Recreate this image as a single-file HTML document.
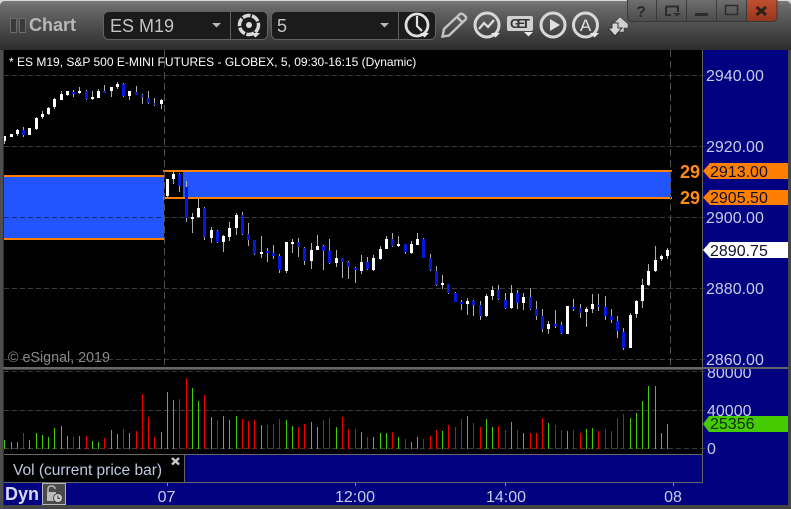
<!DOCTYPE html>
<html><head><meta charset="utf-8"><title>Chart</title>
<style>
html,body{margin:0;padding:0;background:#d8d8d8;width:791px;height:509px;overflow:hidden}
svg{display:block;position:absolute;left:0;top:0}
text{font-family:"Liberation Sans",sans-serif}
</style></head><body>
<svg width="791" height="509" viewBox="0 0 791 509" xmlns="http://www.w3.org/2000/svg">
<defs>
<linearGradient id="tb" x1="0" y1="0" x2="0" y2="1"><stop offset="0" stop-color="#7a7a7a"/><stop offset=".1" stop-color="#6a6a6a"/><stop offset="1" stop-color="#2c2c2c"/></linearGradient>
<linearGradient id="wb" x1="0" y1="0" x2="0" y2="1"><stop offset="0" stop-color="#6e6e6e"/><stop offset="1" stop-color="#4c4c4c"/></linearGradient>
<linearGradient id="cb" x1="0" y1="0" x2="0" y2="1"><stop offset="0" stop-color="#c05030"/><stop offset="1" stop-color="#98361f"/></linearGradient>
</defs>
<path d="M0 7Q0 1 6 1H785Q791 1 791 7V509H0Z" fill="#454545"/>
<path d="M0 7Q0 1 6 1H785Q791 1 791 7V50H0Z" fill="url(#tb)"/>
<rect x="0" y="50" width="3" height="459" fill="#4e4e4e"/>
<rect x="3" y="50" width="1" height="455" fill="#2e2e2e"/>

<!-- left title -->
<g fill="#3a3a3a" stroke="#6c6c6c" stroke-width="1"><rect x="10.5" y="18.5" width="6" height="14"/><rect x="19.5" y="18.5" width="6" height="14"/></g>
<text x="29" y="31" font-size="18" font-weight="bold" fill="#b8b8b8">Chart</text>

<!-- dropdowns -->
<rect x="103.5" y="11.5" width="164" height="28" rx="5" fill="#1b1b1b" stroke="#626262"/>
<path d="M230.5 12V39" stroke="#626262"/>
<text x="110" y="32" font-size="18" fill="#c4c4c4">ES M19</text>
<path d="M212 23h9l-4.500 4.500z" fill="#b8b8b8"/>
<rect x="271.500" y="11.500" width="164" height="28" rx="5" fill="#1b1b1b" stroke="#626262"/>
<path d="M398.500 12V39" stroke="#626262"/>
<text x="277" y="32" font-size="18" fill="#c4c4c4">5</text>
<path d="M380 23h9l-4.500 4.500z" fill="#b8b8b8"/>

<!-- gear -->
<circle cx="249" cy="25" r="9.500" fill="none" stroke="#d8d8d8" stroke-width="3.500" stroke-dasharray="8 1.500"/>
<circle cx="249" cy="25" r="3" fill="#e0e0e0"/>
<path d="M251 33h9l-4.500 4.500z" fill="#e0e0e0"/>
<!-- clock -->
<circle cx="417" cy="25" r="11" fill="none" stroke="#e0e0e0" stroke-width="2.800"/>
<path d="M417 16V26L422 31" fill="none" stroke="#e0e0e0" stroke-width="2.200"/>
<path d="M420 33h9l-4.500 4.500z" fill="#e8e8e8"/>
<!-- pencil -->
<path d="M442.500 36.500L444 29L460 14Q462 13 464 15L466 17Q466.500 19 465 20L449 35.500Z M457 17L463 23" fill="none" stroke="#c4c4c4" stroke-width="2.400"/>
<!-- trend -->
<circle cx="487" cy="25" r="12" fill="none" stroke="#d8d8d8" stroke-width="3"/>
<path d="M479 29L484 23L488 27L494 20" fill="none" stroke="#e0e0e0" stroke-width="2.200"/>
<path d="M491 33h9l-4.500 4.500z" fill="#e8e8e8"/>
<!-- GET -->
<rect x="507" y="16" width="26" height="15" rx="2" fill="#d0d0d0"/>
<text x="510" y="28" font-size="13" font-weight="bold" fill="#333" textLength="20" font-family="Liberation Mono">GET</text>
<path d="M524 32h9l-4.500 4.500z" fill="#e8e8e8"/>
<!-- play -->
<circle cx="553" cy="25" r="12" fill="none" stroke="#d8d8d8" stroke-width="3"/>
<path d="M550 19L560 25L550 31Z" fill="#e0e0e0"/>
<!-- A -->
<circle cx="585.500" cy="25" r="12" fill="none" stroke="#d8d8d8" stroke-width="3"/>
<text x="585.500" y="31" font-size="17" text-anchor="middle" fill="#e0e0e0">A</text>
<path d="M590 33h9l-4.500 4.500z" fill="#e8e8e8"/>
<!-- updown arrows -->
<path d="M620 17L628 24V28H624V32H618V24H613Z" fill="#d0d0d0" stroke="#333" stroke-width=".5"/>
<path d="M608 28H612V23H618V28H622L615 36Z" fill="#d8d8d8" stroke="#333"/>

<!-- window buttons -->
<path d="M627 0H777V17Q777 21 773 21H631Q627 21 627 17Z" fill="url(#wb)"/>
<path d="M747 0H777V17Q777 21 773 21H747Z" fill="url(#cb)"/>
<path d="M627.500 0V17Q627.500 21 631 21.500H773Q777 21 777 17V0" fill="none" stroke="#3a3a3a"/>
<path d="M656.500 0V21M686.500 0V21M716.500 0V21M746.500 0V21" stroke="#3a3a3a"/>
<text x="641" y="17" font-size="16" font-weight="bold" text-anchor="middle" fill="#2a2a2a">?</text>
<path d="M666 6.500H678V12M666 6.500V15H671" fill="none" stroke="#2c2c2c" stroke-width="2"/>
<path d="M673 13h8l-4 3.500z" fill="#2c2c2c"/>
<rect x="695" y="13" width="13" height="3" fill="#2c2c2c"/>
<rect x="725.500" y="5.500" width="12" height="9" fill="none" stroke="#2c2c2c" stroke-width="1.500"/>
<path d="M756.500 7L766 15M766 7L756.500 15" stroke="#2c2018" stroke-width="3"/>

<!-- chart area -->
<rect x="4" y="50" width="698" height="318" fill="#000"/>
<rect x="703" y="50" width="85" height="455" fill="#000080"/>
<rect x="702" y="50" width="1" height="404" fill="#666"/>

<!-- bands -->
<rect x="4" y="177" width="160" height="61" fill="#2255ff"/>
<rect x="4" y="175" width="161" height="2" fill="#ff8000"/>
<rect x="4" y="238" width="161" height="2" fill="#ff8000"/>
<rect x="183" y="172" width="488" height="25" fill="#2255ff"/>
<rect x="163" y="170" width="509" height="2" fill="#ff8000"/>
<rect x="163" y="197" width="509" height="2" fill="#ff8000"/>

<!-- grid -->
<path d="M4 75.500H706M4 146.500H706M4 217.500H706M4 288.500H706M4 359.500H706" stroke="#3a3a3a" stroke-dasharray="5 3"/>
<path d="M4 217.500H164" stroke="#0c2a80" stroke-dasharray="5 3"/>
<path d="M164.500 50V368M670.500 50V368" stroke="#505050" stroke-dasharray="7 4"/>

<!-- wicks -->
<path shape-rendering="crispEdges" stroke="#b0b0b0" stroke-width="1" fill="none" d="M4.500 136V144M11.500 134V137M17.500 129V136M23.500 127V137M29.500 128V135M36.500 117V130M42.500 111V119M48.500 107V115M54.500 98V109M61.500 91V100M67.500 91V96M73.500 90V97M79.500 87V94M86.500 90V100M92.500 91V100M98.500 89V98M104.500 85V93M111.500 87V97M117.500 82V89M123.500 83V97M129.500 91V100M136.500 86V95M142.500 94V104M148.500 91V104M154.500 98V106M161.500 99V109M167.500 179V197M173.500 171V184M179.500 173V192M186.500 181V222M192.500 213V233M198.500 199V218M204.500 207V240M211.500 227V243M217.500 230V243M223.500 235V252M229.500 222V241M236.500 213V235M242.500 212V235M248.500 223V246M254.500 240V255M261.500 236V258M267.500 248V262M273.500 245V259M279.500 254V273M286.500 242V273M292.500 239V253M298.500 238V257M304.500 247V265M311.500 243V269M317.500 235V250M323.500 245V270M329.500 239V264M336.500 250V267M342.500 258V278M348.500 261V279M355.500 267V283M361.500 255V274M367.500 257V270M373.500 255V271M380.500 246V260M386.500 236V249M392.500 233V247M398.500 236V247M405.500 244V254M411.500 241V254M417.500 233V245M423.500 238V258M430.500 254V271M436.500 266V286M442.500 275V289M448.500 284V294M455.500 292V302M461.500 300V310M467.500 298V315M473.500 300V316M480.500 301V320M486.500 294V317M492.500 286V300M498.500 285V300M505.500 293V309M511.500 285V309M517.500 290V309M523.500 293V310M530.500 288V310M536.500 301V320M542.500 309V332M548.500 321V334M555.500 310V328M561.500 322V334M567.500 306V334M573.500 299V311M580.500 304V318M586.500 307V327M592.500 294V313M598.500 294V311M605.500 296V320M611.500 309V323M617.500 316V338M623.500 328V350M630.500 313V348M636.500 300V318M642.500 279V308M648.500 264V286M655.500 246V272M661.500 255V261M667.500 248V259"/>
<!-- white bodies -->
<path shape-rendering="crispEdges" fill="#fff" d="M4 136h2v5h-2zM10 134h3v3h-3zM16 130h3v4h-3zM28 128h3v7h-3zM35 118h3v11h-3zM41 114h3v3h-3zM47 108h3v6h-3zM53 99h3v8h-3zM60 94h3v6h-3zM66 91h3v4h-3zM78 91h3v2h-3zM91 97h3v2h-3zM97 91h3v7h-3zM110 87h3v4h-3zM116 84h3v3h-3zM128 91h3v5h-3zM160 100h3v4h-3zM166 179h3v17h-3zM172 174h3v5h-3zM191 217h3v2h-3zM197 208h3v9h-3zM210 230h3v8h-3zM222 236h3v6h-3zM228 228h3v9h-3zM235 215h3v13h-3zM260 252h3v2h-3zM285 242h3v29h-3zM291 242h3v2h-3zM310 250h3v11h-3zM316 246h3v4h-3zM335 258h3v5h-3zM360 262h3v9h-3zM372 258h3v12h-3zM379 249h3v10h-3zM385 239h3v10h-3zM397 244h3v2h-3zM410 244h3v9h-3zM416 239h3v6h-3zM441 283h3v2h-3zM466 301h3v3h-3zM485 296h3v20h-3zM491 290h3v6h-3zM510 293h3v15h-3zM522 297h3v6h-3zM547 324h3v5h-3zM566 306h3v28h-3zM585 309h3v3h-3zM591 304h3v5h-3zM629 315h3v33h-3zM635 301h3v13h-3zM641 285h3v16h-3zM647 271h3v14h-3zM654 260h3v11h-3zM660 256h3v3h-3zM666 250h3v6h-3z"/>
<!-- blue bodies -->
<path shape-rendering="crispEdges" fill="#0018e0" d="M22 130h3v5h-3zM72 92h3v2h-3zM85 91h3v8h-3zM103 91h3v2h-3zM122 84h3v12h-3zM135 92h3v3h-3zM141 95h3v2h-3zM147 98h3v5h-3zM153 103h3v2h-3zM178 174h3v12h-3zM185 187h3v31h-3zM203 208h3v29h-3zM216 231h3v11h-3zM241 215h3v19h-3zM247 234h3v6h-3zM253 240h3v14h-3zM266 251h3v2h-3zM272 253h3v3h-3zM278 256h3v14h-3zM297 242h3v5h-3zM303 248h3v13h-3zM322 246h3v5h-3zM328 251h3v12h-3zM341 258h3v4h-3zM347 262h3v5h-3zM354 268h3v2h-3zM366 262h3v7h-3zM391 239h3v7h-3zM404 244h3v8h-3zM422 239h3v19h-3zM429 258h3v12h-3zM435 271h3v14h-3zM447 284h3v9h-3zM454 293h3v9h-3zM460 302h3v2h-3zM472 301h3v4h-3zM479 305h3v11h-3zM497 290h3v9h-3zM504 300h3v8h-3zM516 293h3v10h-3zM529 297h3v12h-3zM535 309h3v7h-3zM541 316h3v13h-3zM554 324h3v2h-3zM560 325h3v8h-3zM572 307h3v2h-3zM579 308h3v5h-3zM597 305h3v2h-3zM604 307h3v9h-3zM610 316h3v4h-3zM616 321h3v10h-3zM622 332h3v16h-3z"/>

<text x="9" y="66" font-size="12" fill="#fff">* ES M19, S&amp;P 500 E-MINI FUTURES - GLOBEX, 5, 09:30-16:15 (Dynamic)</text>
<text x="8" y="362" font-size="14.300" fill="#8a8a8a">© eSignal, 2019</text>

<text x="680" y="178" font-size="18" font-weight="bold" fill="#ff8c10">29</text>
<text x="680" y="204" font-size="18" font-weight="bold" fill="#ff8c10">29</text>

<!-- axis labels -->
<g font-size="16" fill="#c8cce4">
<text x="706" y="81">2940.00</text>
<text x="706" y="152">2920.00</text>
<text x="706" y="223">2900.00</text>
<text x="706" y="294">2880.00</text>
<text x="706" y="365">2860.00</text>
</g>
<path d="M710 163H788V179H710L703 171Z" fill="#ff8000"/>
<path d="M710 190H788V205H710L703 197.500Z" fill="#ff8000"/>
<path d="M710 242H788V258H710L703 250Z" fill="#fff"/>
<g font-size="16" fill="#101030">
<text x="710" y="177">2913.00</text>
<text x="710" y="203">2905.50</text>
<text x="710" y="256">2890.75</text>
</g>

<!-- volume pane -->
<rect x="4" y="370" width="698" height="84" fill="#000"/>
<rect x="703" y="368" width="85" height="90" fill="#000080"/>
<g font-size="16" fill="#c8cce4">
<text x="707" y="378">80000</text>
<text x="707" y="416">40000</text>
<text x="707" y="454">0</text>
</g>
<rect x="3" y="367" width="785" height="2" fill="#666"/>
<path d="M4 371.500H706M4 410.500H706M4 448.500H706" stroke="#3a3a3a" stroke-dasharray="5 3"/>
<path d="M709 416H788V432H709L703 424Z" fill="#44cc00"/>
<text x="710" y="429" font-size="16" fill="#0a2a10">25356</text>
<!-- green vol -->
<path shape-rendering="crispEdges" stroke="#44cc00" fill="none" d="M4.500 440V449M11.500 442V449M17.500 442V449M29.500 440V449M36.500 433V449M42.500 435V449M48.500 437V449M54.500 428V449M61.500 426V449M67.500 436V449M79.500 436V449M92.500 441V449M98.500 442V449M111.500 430V449M117.500 434V449M129.500 433V449M161.500 432V449M167.500 392V449M173.500 400V449M192.500 388V449M198.500 401V449M211.500 417V449M223.500 416V449M229.500 420V449M236.500 416V449M261.500 425V449M286.500 420V449M292.500 426V449M311.500 422V449M317.500 427V449M336.500 427V449M361.500 432V449M373.500 437V449M380.500 433V449M386.500 433V449M398.500 437V449M411.500 442V449M417.500 437V449M442.500 431V449M467.500 416V449M486.500 419V449M492.500 427V449M511.500 422V449M523.500 433V449M548.500 423V449M567.500 431V449M586.500 429V449M592.500 428V449M630.500 418V449M636.500 413V449M642.500 401V449M648.500 386V449M655.500 386V449M661.500 433V449M667.500 424V449"/>
<!-- red vol -->
<path shape-rendering="crispEdges" stroke="#ee0000" fill="none" d="M23.500 433V449M73.500 437V449M86.500 436V449M104.500 438V449M123.500 429V449M136.500 431V449M142.500 394V449M148.500 417V449M154.500 437V449M179.500 399V449M186.500 378V449M204.500 395V449M217.500 420V449M242.500 419V449M248.500 421V449M254.500 420V449M267.500 425V449M273.500 424V449M279.500 419V449M298.500 427V449M304.500 424V449M323.500 420V449M329.500 418V449M342.500 417V449M348.500 429V449M355.500 429V449M367.500 437V449M392.500 432V449M405.500 439V449M423.500 439V449M430.500 436V449M436.500 430V449M448.500 425V449M455.500 427V449M461.500 419V449M473.500 423V449M480.500 427V449M498.500 426V449M505.500 430V449M517.500 430V449M530.500 433V449M536.500 433V449M542.500 418V449M555.500 425V449M561.500 430V449M573.500 430V449M580.500 433V449M598.500 431V449M605.500 429V449M611.500 431V449M617.500 418V449M623.500 414V449"/>

<!-- legend row -->
<rect x="4" y="455" width="180" height="27" fill="#000"/>
<rect x="185" y="455" width="518" height="27" fill="#000080"/>
<rect x="703" y="454" width="85" height="30" fill="#000080"/>
<rect x="4" y="454" width="699" height="1" fill="#666"/>
<rect x="184" y="454" width="1" height="28" fill="#666"/>
<rect x="702" y="454" width="1" height="29" fill="#666"/>
<text x="13" y="475" font-size="15.500" fill="#c0c8dc">Vol (current price bar)</text>
<path d="M172 458L179 464.500M179 458L172 464.500" stroke="#c8c8c8" stroke-width="2.500"/>

<!-- bottom axis -->
<rect x="4" y="483" width="784" height="22" fill="#000080"/>
<rect x="4" y="482" width="699" height="1" fill="#666"/>
<path d="M167.500 483V486M355.500 483V486M505.500 483V486M673.500 483V486" stroke="#888"/>
<g font-size="16" fill="#c8cce4" text-anchor="middle">
<text x="166.500" y="502">07</text>
<text x="355" y="502">12:00</text>
<text x="506" y="502">14:00</text>
<text x="673" y="502">08</text>
</g>
<text x="5" y="500" font-size="18" font-weight="bold" fill="#d8d8ec">Dyn</text>
<rect x="42.500" y="483.500" width="23" height="21" fill="#4a4a4a" stroke="#b8b8b8"/>
<path d="M48 492V489Q48 486 51.500 486Q55 486 55 489" fill="none" stroke="#bbb" stroke-width="1.500"/>
<rect x="47" y="492" width="9" height="9" fill="#bbb"/>
<circle cx="58" cy="498" r="4.500" fill="#ccc" stroke="#444"/>
<path d="M58 495.500V498.500H60" stroke="#333" fill="none"/>
</svg>
</body></html>
